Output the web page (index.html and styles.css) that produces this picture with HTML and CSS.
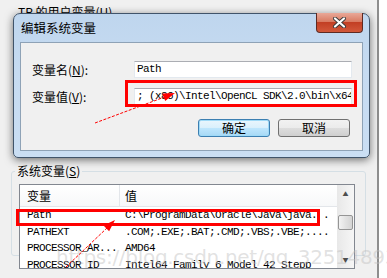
FILE: index.html
```html
<!DOCTYPE html>
<html lang="zh-CN">
<head>
    <meta charset="UTF-8" />
    <title>编辑系统变量</title>
    <link rel="stylesheet" href="styles.css">
</head>
<body>
    <div class="janela">
        <div class="rotulo-usuario">TP 的用户变量(<u>U</u>)</div>
        <fieldset class="grupo">
            <legend>系统变量(<u>S</u>)</legend>
            <div class="lista">
                <div class="linhas">
                    <div class="cabecalho">
                        <div class="col1">变量</div>
                        <div class="col2">值</div>
                    </div>
                    <div class="linha"><div class="col1">Path</div><div class="col2">C:\ProgramData\Oracle\Java\java. .</div></div>
                    <div class="linha"><div class="col1">PATHEXT</div><div class="col2">.COM;.EXE;.BAT;.CMD;.VBS;.VBE;....</div></div>
                    <div class="linha"><div class="col1">PROCESSOR_AR...</div><div class="col2">AMD64</div></div>
                    <div class="linha"><div class="col1">PROCESSOR_ID</div><div class="col2">Intel64 Family 6 Model 42 Stepp</div></div>
                </div>
                <div class="rolagem">
                    <div class="seta">&#9650;</div>
                    <div class="trilho"><div class="polegar"></div></div>
                    <div class="seta">&#9660;</div>
                </div>
            </div>
        </fieldset>
    </div>

    <div class="dialogo">
        <div class="titulo">编辑系统变量</div>
        <div class="fechar">
            <svg width="17" height="11" viewBox="0 0 17 11">
                <path d="M4 1.5 L13 9.5 M13 1.5 L4 9.5" stroke="#3a3a3a" stroke-width="4" stroke-linecap="round"/>
                <path d="M4 1.5 L13 9.5 M13 1.5 L4 9.5" stroke="#fff" stroke-width="2.2" stroke-linecap="round"/>
            </svg>
        </div>
        <div class="painel">
            <div class="campo">
                <label>变量名(<u>N</u>):</label>
                <div class="entrada">Path</div>
            </div>
            <div class="campo">
                <label>变量值(<u>V</u>):</label>
                <div class="entrada">; (x86)\Intel\OpenCL SDK\2.0\bin\x64<span class="cursor"></span></div>
            </div>
            <div class="botoes">
                <button class="padrao">确定</button>
                <button>取消</button>
            </div>
        </div>
    </div>

    <div class="marca">https://blog.csdn.net/qq_32514893</div>

    <svg class="anotacoes" width="387" height="278" viewBox="0 0 387 278">
        <rect x="126.5" y="81.5" width="229" height="24" fill="none" stroke="#f00" stroke-width="3"/>
        <rect x="17.5" y="210.5" width="301" height="14" fill="none" stroke="#f00" stroke-width="3"/>
        <line x1="95" y1="123" x2="166" y2="96.5" stroke="#f00" stroke-width="1" stroke-dasharray="3 1.5"/>
        <polygon points="175,93 165.2,100.9 162.4,93.5" fill="#f00"/>
        <line x1="66" y1="267" x2="108" y2="227" stroke="#f00" stroke-width="1" stroke-dasharray="3 1.5"/>
        <polygon points="115,220 109.1,231.2 103.5,225.4" fill="#f00"/>
    </svg>
</body>
</html>
```

FILE: styles.css
```css
body {
    margin: 0;
    width: 387px;
    height: 278px;
    overflow: hidden;
    position: relative;
    background: #fff;
    font-family: "Noto Sans CJK SC", sans-serif;
    font-size: 12px;
}
.janela {
    width: 377px;
    height: 278px;
    background: #f0f0f0;
    border-right: 2px solid #8e8e8e;
    overflow: hidden;
}
.rotulo-usuario {
    margin: 5px 0 0 18px;
    line-height: 14px;
    color: #000;
}
.grupo {
    margin: 146px 11px 0 11px;
    padding: 7px 10px 5px 7px;
    border: 1px solid #d5dfe5;
    border-radius: 3px;
    height: 91px;
    box-sizing: border-box;
    min-width: 0;
}
.grupo legend {
    margin-left: -4px;
    padding: 0 2px;
    line-height: 12px;
}
.lista {
    display: flex;
    height: 85px;
    box-sizing: border-box;
    border: 1px solid #828790;
    background: #fff;
    overflow: hidden;
}
.linhas {
    flex: 1;
    font-family: "Liberation Mono", monospace;
    font-size: 11px;
    letter-spacing: -0.6px;
    color: #000;
    white-space: nowrap;
    overflow: hidden;
}
.cabecalho {
    display: flex;
    height: 22px;
    line-height: 22px;
    background: linear-gradient(#fff, #f7f8f9);
    border-bottom: 1px solid #e3e6ea;
    box-sizing: border-box;
    font-family: "Noto Sans CJK SC", sans-serif;
    font-size: 12px;
    letter-spacing: 0;
}
.cabecalho .col1 {
    border-right: 1px solid #e3e6ea;
}
.linha {
    display: flex;
    height: 16.5px;
    line-height: 16.5px;
}
.col1 {
    width: 100px;
    padding-left: 7px;
    box-sizing: border-box;
    overflow: hidden;
}
.col2 {
    padding-left: 5px;
}
.rolagem {
    width: 17px;
    display: flex;
    flex-direction: column;
    background: linear-gradient(90deg, #e8e8e8, #f6f6f6);
}
.seta {
    height: 17px;
    line-height: 17px;
    text-align: center;
    font-size: 6px;
    color: #4d4d4d;
}
.trilho {
    flex: 1;
    padding-top: 13px;
}
.polegar {
    width: 15px;
    height: 15px;
    margin-left: 1px;
    box-sizing: border-box;
    border: 1px solid #959595;
    border-radius: 2px;
    background: linear-gradient(90deg, #f3f3f3, #e2e2e2 50%, #d4d4d4);
}

.dialogo {
    position: absolute;
    left: 13px;
    top: 13px;
    width: 357px;
    height: 145px;
    box-sizing: border-box;
    border: 1px solid #40546a;
    border-radius: 7px 7px 5px 5px;
    background: linear-gradient(#bfd6ee, #c6dbf1 40%, #cadef3);
    box-shadow: 0 2px 9px rgba(0, 0, 0, 0.55);
    display: flex;
    flex-direction: column;
}
.titulo {
    height: 28px;
    line-height: 28px;
    padding-left: 7px;
    color: #000;
    font-size: 12.5px;
}
.fechar {
    position: absolute;
    top: -1px;
    right: 6px;
    width: 47px;
    height: 20px;
    box-sizing: border-box;
    border: 1px solid #5e2a22;
    border-top: none;
    border-radius: 0 0 4px 4px;
    background: linear-gradient(#e9a898, #d97c63 45%, #c23f24 50%, #d2583a);
    display: flex;
    align-items: center;
    justify-content: center;
}
.painel {
    flex: 1;
    margin: 0 6px 6px 6px;
    border: 1px solid #8ea2b6;
    background: #f0f0f0;
    padding: 18px 10px 0 11px;
}
.campo {
    display: flex;
    align-items: center;
    margin-bottom: 10px;
}
.campo label {
    width: 102px;
}
.entrada {
    width: 218px;
    height: 17px;
    box-sizing: border-box;
    border: 1px solid #e3e9ef;
    border-top-color: #abadb3;
    background: #fff;
    padding-left: 2px;
    font-family: "Liberation Mono", monospace;
    font-size: 11px;
    letter-spacing: -0.6px;
    line-height: 15px;
    white-space: nowrap;
    overflow: hidden;
}
.cursor {
    display: inline-block;
    width: 1px;
    height: 12px;
    background: #000;
    vertical-align: -2px;
    margin-left: 1px;
}
.botoes {
    display: flex;
    justify-content: flex-end;
    gap: 8px;
    margin-top: 14px;
    margin-right: 2px;
}
.botoes button {
    width: 72px;
    height: 18px;
    padding: 0;
    border: 1px solid #707070;
    border-radius: 3px;
    background: linear-gradient(#f2f2f2, #ebebeb 50%, #dddddd 51%, #cfcfcf);
    font-family: "Noto Sans CJK SC", sans-serif;
    font-size: 12px;
    line-height: 16px;
    color: #000;
}
.botoes .padrao {
    border-color: #3c7fb1;
    background: linear-gradient(#eaf6fd, #d9f0fc 50%, #bee6fd 51%, #a7d9f5);
    box-shadow: inset 0 0 0 1px #9fdaf7;
}

.marca {
    position: absolute;
    left: 56px;
    top: 245px;
    font-family: "DejaVu Sans", sans-serif;
    font-size: 20px;
    color: rgba(190, 190, 190, 0.45);
    white-space: nowrap;
    letter-spacing: -0.3px;
}
.anotacoes {
    position: absolute;
    left: 0;
    top: 0;
    pointer-events: none;
}
```
